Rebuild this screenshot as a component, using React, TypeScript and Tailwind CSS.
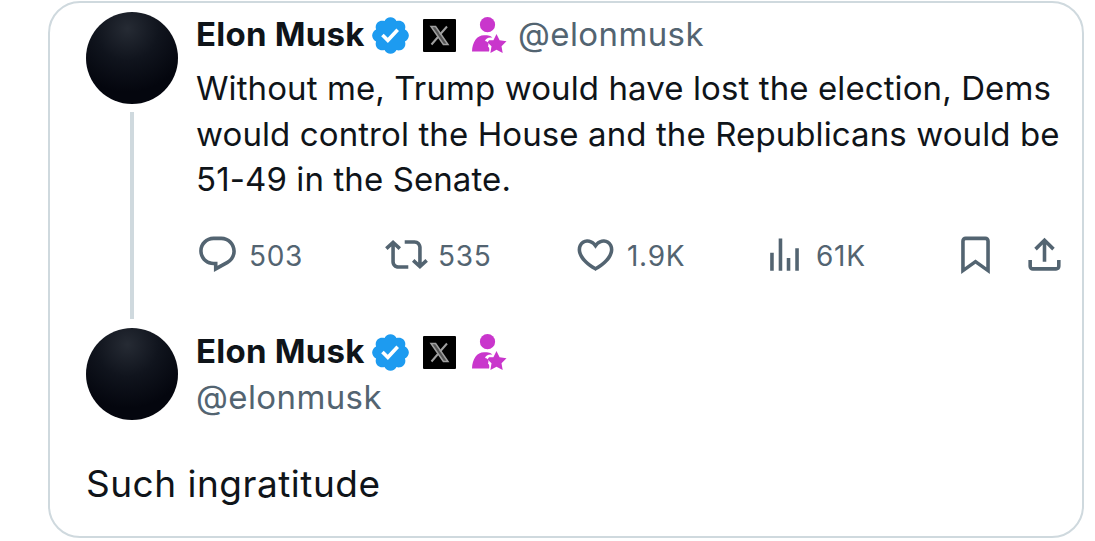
import React from "react";

const paths = {
  reply:
    "M1.751 10c0-4.42 3.584-8 8.005-8h4.366c4.49 0 8.129 3.64 8.129 8.13 0 2.96-1.607 5.68-4.196 7.11l-8.054 4.46v-3.69h-.067c-4.49.1-8.183-3.51-8.183-8.01zm8.005-6c-3.317 0-6.005 2.69-6.005 6 0 3.37 2.77 6.08 6.138 6.01l.351-.01h1.761v2.3l5.087-2.81c1.951-1.08 3.163-3.13 3.163-5.36 0-3.39-2.744-6.13-6.129-6.13H9.756z",
  repost:
    "M4.5 3.88l4.432 4.14-1.364 1.46L5.5 7.55V16c0 1.1.896 2 2 2H13v2H7.5c-2.209 0-4-1.79-4-4V7.55L1.432 9.48.068 8.02 4.5 3.88zM16.5 6H11V4h5.5c2.209 0 4 1.79 4 4v8.45l2.068-1.93 1.364 1.46-4.432 4.14-4.432-4.14 1.364-1.46 2.068 1.93V8c0-1.1-.896-2-2-2z",
  like: "M16.697 5.5c-1.222-.06-2.679.51-3.89 2.16l-.805 1.09-.806-1.09C9.984 6.01 8.526 5.44 7.304 5.5c-1.243.07-2.349.78-2.91 1.91-.552 1.12-.633 2.78.479 4.82 1.074 1.97 3.257 4.27 7.129 6.61 3.87-2.34 6.052-4.64 7.126-6.61 1.111-2.04 1.03-3.7.477-4.82-.561-1.13-1.666-1.84-2.908-1.91zm4.187 7.69c-1.351 2.48-4.001 5.12-8.379 7.67l-.503.3-.504-.3c-4.379-2.55-7.029-5.19-8.382-7.67-1.36-2.5-1.41-4.86-.514-6.67.887-1.79 2.647-2.91 4.601-3.01 1.651-.09 3.368.56 4.798 2.01 1.429-1.45 3.146-2.1 4.796-2.01 1.954.1 3.714 1.22 4.601 3.01.896 1.81.846 4.17-.514 6.67z",
  views:
    "M8.75 21V3h2v18h-2zM18 21V8.5h2V21h-2zM4 21l.004-10h2L6 21H4zm9.248 0v-7h2v7h-2z",
  bookmark:
    "M4 4.5C4 3.12 5.119 2 6.5 2h11C18.881 2 20 3.12 20 4.5v18.44l-8-5.71-8 5.71V4.5zM6.5 4c-.276 0-.5.22-.5.5v14.56l6-4.29 6 4.29V4.5c0-.28-.224-.5-.5-.5h-11z",
  share:
    "M12 2.59l5.7 5.7-1.41 1.42L13 6.41V16h-2V6.41l-3.3 3.3-1.41-1.42L12 2.59zM21 15l-.02 3.51c0 1.38-1.12 2.49-2.5 2.49H5.5C4.11 21 3 19.88 3 18.5V15h2v3.5c0 .28.22.5.5.5h12.98c.28 0 .5-.22.5-.5L19 15h2z",
};

const stats = [
  { id: 1, icon: paths.reply, value: "503" },
  { id: 2, icon: paths.repost, value: "535" },
  { id: 3, icon: paths.like, value: "1.9K" },
  { id: 4, icon: paths.views, value: "61K" },
];

function Icon({ d }: { d: string }) {
  return (
    <svg viewBox="0 0 24 24" className="size-[43px] shrink-0 fill-[#536471]">
      <path d={d} />
    </svg>
  );
}

function Avatar() {
  return (
    <div className="size-[92px] shrink-0 rounded-full bg-[#04060e] bg-[radial-gradient(circle_at_45%_18%,#262b34_0%,#10141d_35%,#04060e_70%)]" />
  );
}

function VerifiedBadge() {
  return (
    <svg viewBox="0 0 22 22" className="size-[43px] shrink-0 fill-[#1d9bf0]">
      <path d="M20.396 11c-.018-.646-.215-1.275-.57-1.816-.354-.54-.852-.972-1.438-1.246.223-.607.27-1.264.14-1.897-.131-.634-.437-1.218-.882-1.687-.47-.445-1.053-.75-1.687-.882-.633-.13-1.29-.083-1.897.14-.273-.587-.704-1.086-1.245-1.44S11.647 1.62 11 1.604c-.646.017-1.273.213-1.813.568s-.969.854-1.24 1.44c-.608-.223-1.267-.272-1.902-.14-.635.13-1.22.436-1.69.882-.445.47-.749 1.055-.878 1.688-.13.633-.08 1.29.144 1.896-.587.274-1.087.705-1.443 1.245-.356.54-.555 1.17-.574 1.817.02.647.218 1.276.574 1.817.356.54.856.972 1.443 1.245-.224.606-.274 1.263-.144 1.896.13.634.433 1.218.877 1.688.47.443 1.054.747 1.687.878.633.132 1.29.084 1.897-.136.274.586.705 1.084 1.246 1.439.54.354 1.17.551 1.816.569.647-.016 1.276-.213 1.817-.567s.972-.854 1.245-1.44c.604.239 1.266.296 1.903.164.636-.132 1.22-.447 1.68-.907.46-.46.776-1.044.908-1.681s.075-1.299-.165-1.903c.586-.274 1.084-.705 1.439-1.246.354-.54.551-1.17.569-1.816zM9.662 14.85l-3.429-3.428 1.293-1.302 2.072 2.072 4.4-4.794 1.347 1.246z" />
    </svg>
  );
}

function XBadge() {
  return (
    <svg viewBox="0 0 33 33" className="ml-[11px] size-[33px] shrink-0">
      <rect width="33" height="33" rx="1" fill="#000" />
      <g fill="none" stroke="#a0a0a0" strokeWidth="1.5">
        <path d="M8 7.500h4.600L25 25.500h-4.600z" fill="#555" />
        <path d="M24 7.500l-7 8M15 18l-6.500 7.500" strokeWidth="2" />
      </g>
    </svg>
  );
}

function SubscriberBadge() {
  return (
    <svg viewBox="0 0 36 37" className="ml-[15px] h-[37px] w-[36px] shrink-0 fill-[#c936cc]">
      <circle cx="16.500" cy="7.700" r="7.600" />
      <path d="M1 34.500C1.300 25 6 18.300 13 18.300c4.500 0 6.800.3 8.300 2.400-4-.7-6.300.8-7.300 3.300 3.500.5 4 3 3 5.500 1.500 1 1.500 3.500 1 5z" />
      <path d="M25.500 17l3.100 6.300 6.900 1-5 4.900 1.200 6.800-6.200-3.200-6.100 3.200 1.100-6.800-4-3.600 1.500-2.300 4.400 0z" />
    </svg>
  );
}

function UserName() {
  return (
    <>
      <span className="w-[173px] text-[33px] font-bold tracking-[0.25px] text-[#0f1419]">
        Elon Musk
      </span>
      <VerifiedBadge />
      <XBadge />
      <SubscriberBadge />
    </>
  );
}

function App() {
  return (
    <div className="h-[541px] bg-white pt-px pl-12 font-['Inter',sans-serif] whitespace-nowrap text-[#0f1419]">
      <div className="h-[537px] w-[1036px] rounded-[32px] border-2 border-[#cfd9de] pt-[9px] pl-9">
        <div className="flex h-[316px] gap-[18px]">
          <div className="flex flex-col items-center">
            <Avatar />
            <div className="mt-2 h-[207px] w-1 bg-[#cfd9de]" />
          </div>
          <div>
            <div className="flex h-[46px] items-center">
              <UserName />
              <span className="ml-[11px] text-[33px] tracking-[0.4px] text-[#536471]">@elonmusk</span>
            </div>
            <div className="mt-2 text-[33px] leading-[45.5px]">
              <p className="tracking-[0.1px]">Without me, Trump would have lost the election, Dems</p>
              <p className="tracking-[0.1px]">would control the House and the Republicans would be</p>
              <p className="tracking-[0.1px]">51-49 in the Senate.</p>
            </div>
            <div className="mt-[29px] flex h-[46px] items-center text-[#536471]">
              {stats.map((item) => {
                return (
                  <div key={item.id} className="flex w-[189px] items-center gap-[10px]">
                    <Icon d={item.icon} />
                    <span className="pt-[3px] text-[28px] tracking-[0.7px]">{item.value}</span>
                  </div>
                );
              })}
              <div className="flex gap-[26px] pl-[2px]">
                <Icon d={paths.bookmark} />
                <Icon d={paths.share} />
              </div>
            </div>
          </div>
        </div>
        <div className="flex gap-[18px]">
          <Avatar />
          <div className="pt-px">
            <div className="flex h-[46px] items-center">
              <UserName />
            </div>
            <p className="-mt-px text-[33px] leading-[46px] tracking-[0.4px] text-[#536471]">@elonmusk</p>
          </div>
        </div>
        <p className="mt-10 text-[37px] leading-[48px] tracking-[0.5px]">Such ingratitude</p>
      </div>
    </div>
  );
}

export default App;
